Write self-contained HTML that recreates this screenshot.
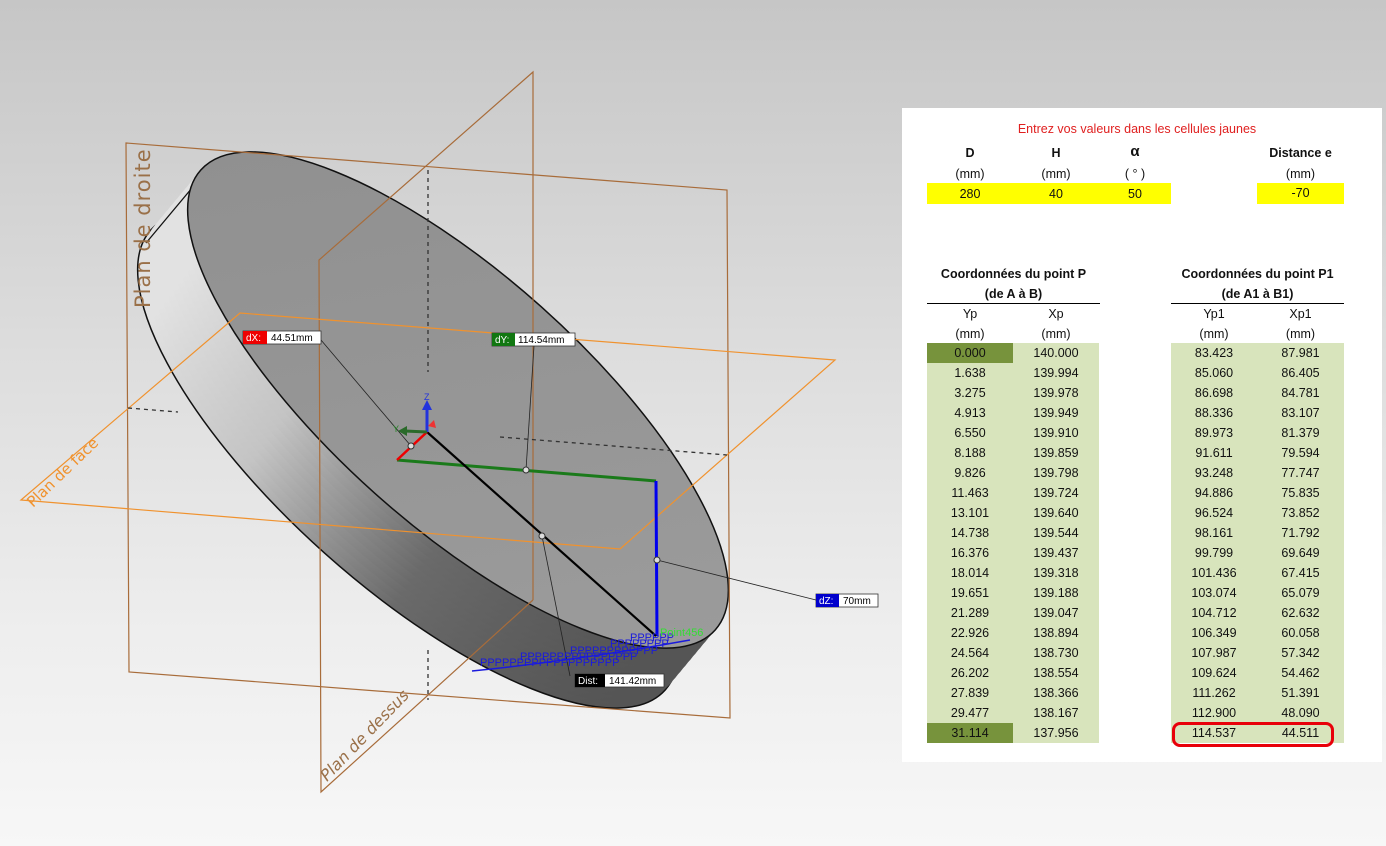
<!DOCTYPE html>
<html><head><meta charset="utf-8">
<style>
html,body{margin:0;padding:0}
body{width:1386px;height:846px;overflow:hidden;position:relative;background:linear-gradient(#c6c6c6 0%,#dcdcdc 40%,#eeeeee 75%,#f7f7f7 100%);font-family:"Liberation Sans",sans-serif}
#panel{position:absolute;left:902px;top:108px;width:480px;height:654px;background:#fff}
.t{position:absolute;font-size:12.5px;color:#111;text-align:center;line-height:20px;height:20px}
.b{font-weight:bold}
.cell{position:absolute;height:20px;line-height:20px;text-align:center;font-size:12.5px;color:#111}
.lg{background:#d8e4bc}
.dg{background:#77933c}
.yl{background:#ffff00}
svg{position:absolute;left:0;top:0}
</style></head><body>
<svg width="900" height="846" viewBox="0 0 900 846">
<defs>
<linearGradient id="side" gradientUnits="userSpaceOnUse" x1="230" y1="380" x2="610" y2="660">
<stop offset="0" stop-color="#e2e2e2"/><stop offset="0.35" stop-color="#c4c4c4"/><stop offset="0.7" stop-color="#6a6a6a"/><stop offset="1" stop-color="#555"/></linearGradient>
<linearGradient id="top" gradientUnits="userSpaceOnUse" x1="200" y1="170" x2="720" y2="600">
<stop offset="0" stop-color="#8f8f8f"/><stop offset="1" stop-color="#9c9c9c"/></linearGradient>
</defs>
<g fill="url(#side)">
<ellipse cx="408" cy="460" rx="345" ry="125" transform="rotate(41.8 408 460)" stroke="#111" stroke-width="1.5"/>
<ellipse cx="413" cy="454" rx="345" ry="125" transform="rotate(41.8 413 454)"/>
<ellipse cx="418" cy="448" rx="345" ry="125" transform="rotate(41.8 418 448)"/>
<ellipse cx="423" cy="442" rx="345" ry="125" transform="rotate(41.8 423 442)"/>
<ellipse cx="428" cy="436" rx="345" ry="125" transform="rotate(41.8 428 436)"/>
<ellipse cx="433" cy="430" rx="345" ry="125" transform="rotate(41.8 433 430)"/>
<ellipse cx="438" cy="424" rx="345" ry="125" transform="rotate(41.8 438 424)"/>
<ellipse cx="443" cy="418" rx="345" ry="125" transform="rotate(41.8 443 418)"/>
<ellipse cx="448" cy="412" rx="345" ry="125" transform="rotate(41.8 448 412)"/>
<ellipse cx="453" cy="406" rx="345" ry="125" transform="rotate(41.8 453 406)"/>
</g>
<line x1="202" y1="176" x2="146" y2="243" stroke="#111" stroke-width="1.3"/>
<ellipse cx="458" cy="400" rx="345" ry="125" transform="rotate(41.8 458 400)" fill="url(#top)" stroke="#111" stroke-width="1.5"/>
<g fill="none" stroke="#a86c3a" stroke-width="1.2">
<polygon points="126,143 727,190 730,718 129,672"/>
<polyline points="533,600 533,72 319,260 321,792 533,600"/>
</g>
<g fill="none" stroke="#f0922e" stroke-width="1.2">
<polygon points="21,500 240,313 835,360 620,549"/>
</g>
<g stroke="#333" stroke-width="1.3" stroke-dasharray="4,4" fill="none">
<line x1="428" y1="170" x2="428" y2="372"/>
<line x1="428" y1="650" x2="428" y2="700"/>
<line x1="500" y1="437" x2="727" y2="455"/>
<line x1="128" y1="408" x2="178" y2="412"/>
</g>
<text x="0" y="0" transform="translate(150,308) rotate(-90)" font-size="21" fill="#9a7048" font-family="DejaVu Sans" letter-spacing="1">Plan de droite</text>
<text x="0" y="0" transform="translate(33,508) rotate(-44)" font-size="15" fill="#f0922e" font-family="DejaVu Sans">Plan de face</text>
<text x="0" y="0" transform="translate(327,782) rotate(-46)" font-size="16" fill="#9a7048" font-family="DejaVu Sans" font-style="italic">Plan de dessus</text>
<g stroke="#222" stroke-width="0.8">
<line x1="321" y1="340" x2="411" y2="446"/>
<line x1="534" y1="346" x2="526" y2="470"/>
<line x1="657" y1="560" x2="816" y2="600"/>
<line x1="542" y1="536" x2="570" y2="676"/>
</g>
<line x1="397" y1="460" x2="656" y2="481" stroke="#1a7a1a" stroke-width="3"/>
<line x1="656" y1="481" x2="657" y2="636" stroke="#0000ee" stroke-width="3"/>
<line x1="427" y1="432" x2="656" y2="636" stroke="#000" stroke-width="2.2"/>
<line x1="427" y1="432" x2="397" y2="460" stroke="#e00" stroke-width="2.5"/>
<g><circle cx="411" cy="446" r="3" fill="#ddd" stroke="#333"/><circle cx="526" cy="470" r="3" fill="#ddd" stroke="#333"/><circle cx="542" cy="536" r="3" fill="#ddd" stroke="#333"/><circle cx="657" cy="560" r="3" fill="#ddd" stroke="#333"/></g>
<line x1="427" y1="432" x2="427" y2="408" stroke="#2233dd" stroke-width="3"/>
<polygon points="422,410 432,410 427,400" fill="#2233dd"/>
<text x="424" y="400" font-size="9" fill="#2233dd">Z</text>
<line x1="427" y1="432" x2="405" y2="431" stroke="#2a6a2a" stroke-width="3"/>
<polygon points="407,426 407,436 398,431" fill="#2a6a2a"/>
<text x="393" y="432" font-size="9" fill="#2a8a2a">Y</text>
<polygon points="428,426 434,420 436,428" fill="#e33"/>
<path d="M472,671 Q580,660 690,640" stroke="#1a1add" stroke-width="1.5" fill="none"/>
<g font-size="11" fill="#1a1add" font-family="Liberation Sans">
<text x="480" y="666">PPPPPPPPPPPPPPPPPPP</text>
<text x="520" y="660">PPPPPPPPPPPPPPPP</text>
<text x="570" y="654">PPPPPPPPPPPP</text>
<text x="610" y="647">PPPPPPPP</text>
<text x="630" y="641">PPPPPP</text>
</g>
<text x="660" y="636" font-size="11" fill="#33dd33">Point456</text>
<g font-size="10" font-family="Liberation Sans">
<rect x="243" y="331" width="78" height="13" fill="#fff" stroke="#333" stroke-width="0.8"/><rect x="243" y="331" width="24" height="13" fill="#e00"/>
<text x="246" y="341" fill="#fff">dX:</text><text x="271" y="341" fill="#000">44.51mm</text>
<rect x="492" y="333" width="83" height="13" fill="#fff" stroke="#333" stroke-width="0.8"/><rect x="492" y="333" width="23" height="13" fill="#117711"/>
<text x="495" y="343" fill="#fff">dY:</text><text x="518" y="343" fill="#000">114.54mm</text>
<rect x="816" y="594" width="62" height="13" fill="#fff" stroke="#333" stroke-width="0.8"/><rect x="816" y="594" width="23" height="13" fill="#0000cc"/>
<text x="819" y="604" fill="#fff">dZ:</text><text x="843" y="604" fill="#000">70mm</text>
<rect x="575" y="674" width="89" height="13" fill="#fff" stroke="#333" stroke-width="0.8"/><rect x="575" y="674" width="30" height="13" fill="#000"/>
<text x="578" y="684" fill="#fff">Dist:</text><text x="609" y="684" fill="#000">141.42mm</text>
</g>
</svg>

<div id="panel"></div>
<div class="t" style="left:927px;top:119px;width:420px;color:#e02020">Entrez vos valeurs dans les cellules jaunes</div>
<div class="t b" style="left:927px;top:143px;width:86px">D</div>
<div class="t b" style="left:1013px;top:143px;width:86px">H</div>
<div class="t b" style="left:1099px;top:142px;width:72px;font-size:15px">α</div>
<div class="t b" style="left:1257px;top:143px;width:87px">Distance e</div>
<div class="t" style="left:927px;top:164px;width:86px">(mm)</div>
<div class="t" style="left:1013px;top:164px;width:86px">(mm)</div>
<div class="t" style="left:1099px;top:164px;width:72px">( ° )</div>
<div class="t" style="left:1257px;top:164px;width:87px">(mm)</div>
<div class="cell yl" style="left:927px;top:183px;width:244px;height:21px"></div>
<div class="cell" style="left:927px;top:184px;width:86px">280</div>
<div class="cell" style="left:1013px;top:184px;width:86px">40</div>
<div class="cell" style="left:1099px;top:184px;width:72px">50</div>
<div class="cell yl" style="left:1257px;top:183px;width:87px;height:21px;line-height:21px">-70</div>

<div class="t b" style="left:927px;top:264px;width:173px">Coordonnées du point P</div>
<div class="t b" style="left:927px;top:284px;width:173px">(de A à B)</div>
<div class="t b" style="left:1171px;top:264px;width:173px">Coordonnées du point P1</div>
<div class="t b" style="left:1171px;top:284px;width:173px">(de A1 à B1)</div>
<div style="position:absolute;left:927px;top:303px;width:173px;height:1px;background:#000"></div>
<div style="position:absolute;left:1171px;top:303px;width:173px;height:1px;background:#000"></div>
<div class="t" style="left:927px;top:304px;width:86px">Yp</div>
<div class="t" style="left:1013px;top:304px;width:86px">Xp</div>
<div class="t" style="left:1171px;top:304px;width:86px">Yp1</div>
<div class="t" style="left:1257px;top:304px;width:87px">Xp1</div>
<div class="t" style="left:927px;top:324px;width:86px">(mm)</div>
<div class="t" style="left:1013px;top:324px;width:86px">(mm)</div>
<div class="t" style="left:1171px;top:324px;width:86px">(mm)</div>
<div class="t" style="left:1257px;top:324px;width:87px">(mm)</div>

<div class="lg" style="position:absolute;left:927px;top:343px;width:172px;height:400px"></div>
<div class="lg" style="position:absolute;left:1171px;top:343px;width:173px;height:400px"></div>
<div class="dg" style="position:absolute;left:927px;top:343px;width:86px;height:20px"></div>
<div class="dg" style="position:absolute;left:927px;top:723px;width:86px;height:20px"></div>

<div style="position:absolute;left:927px;top:343px;width:86px;font-size:12.5px;line-height:20px;text-align:center;color:#111">0.000<br>1.638<br>3.275<br>4.913<br>6.550<br>8.188<br>9.826<br>11.463<br>13.101<br>14.738<br>16.376<br>18.014<br>19.651<br>21.289<br>22.926<br>24.564<br>26.202<br>27.839<br>29.477<br>31.114</div>
<div style="position:absolute;left:1013px;top:343px;width:86px;font-size:12.5px;line-height:20px;text-align:center;color:#111">140.000<br>139.994<br>139.978<br>139.949<br>139.910<br>139.859<br>139.798<br>139.724<br>139.640<br>139.544<br>139.437<br>139.318<br>139.188<br>139.047<br>138.894<br>138.730<br>138.554<br>138.366<br>138.167<br>137.956</div>
<div style="position:absolute;left:1171px;top:343px;width:86px;font-size:12.5px;line-height:20px;text-align:center;color:#111">83.423<br>85.060<br>86.698<br>88.336<br>89.973<br>91.611<br>93.248<br>94.886<br>96.524<br>98.161<br>99.799<br>101.436<br>103.074<br>104.712<br>106.349<br>107.987<br>109.624<br>111.262<br>112.900<br>114.537</div>
<div style="position:absolute;left:1257px;top:343px;width:87px;font-size:12.5px;line-height:20px;text-align:center;color:#111">87.981<br>86.405<br>84.781<br>83.107<br>81.379<br>79.594<br>77.747<br>75.835<br>73.852<br>71.792<br>69.649<br>67.415<br>65.079<br>62.632<br>60.058<br>57.342<br>54.462<br>51.391<br>48.090<br>44.511</div>
<div style="position:absolute;left:1172px;top:722px;width:156px;height:19px;border:3px solid #e8000a;border-radius:8px"></div>
</body></html>
